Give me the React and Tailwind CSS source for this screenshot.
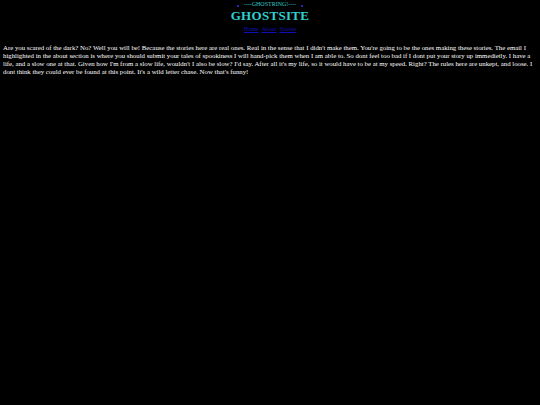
export default function App() {
  return (
    <div className="min-h-[405px] w-[540px] bg-black text-white" style={{ fontFamily: '"Liberation Serif", "Times New Roman", serif' }}>
      <div className="flex flex-col items-center pt-[1px]">
        <div className="flex items-center gap-[5px] text-[6px] leading-[7px] text-[#30c8c8]">
          <span className="mt-[2px] inline-block h-[2px] w-[2px] bg-[#2828b0]"></span>
          <span>----GHOSTRING!----</span>
          <span className="mt-[2px] inline-block h-[2px] w-[2px] bg-[#2828b0]"></span>
        </div>
        <h1 className="mt-[1px] text-[13px] font-bold leading-[14px] tracking-[0.3px] text-[#30d0d0]">GHOSTSITE</h1>
        <nav className="mt-[3px] flex gap-[3px] text-[6px] leading-[7px] text-[#1010b8]">
          <a className="underline">Home</a>
          <a className="underline">About</a>
          <a className="underline">Stories</a>
        </nav>
      </div>
      <p className="mt-[11px] px-[3px] text-[6.8px] leading-[8px]">
        Are you scared of the dark? No? Well you will be! Because the stories here are real ones. Real in the sense that I didn't make them. You're going to be the ones making these stories. The email I highlighted in the about section is where you should submit your tales of spookiness I will hand-pick them when I am able to. So dont feel too bad if I dont put your story up immedietly. I have a life, and a slow one at that. Given how I'm from a slow life, wouldn't I also be slow? I'd say. After all it's my life, so it would have to be at my speed. Right? The rules here are unkept, and loose. I dont think they could ever be found at this point. It's a wild letter chase. Now that's funny!
      </p>
    </div>
  );
}
